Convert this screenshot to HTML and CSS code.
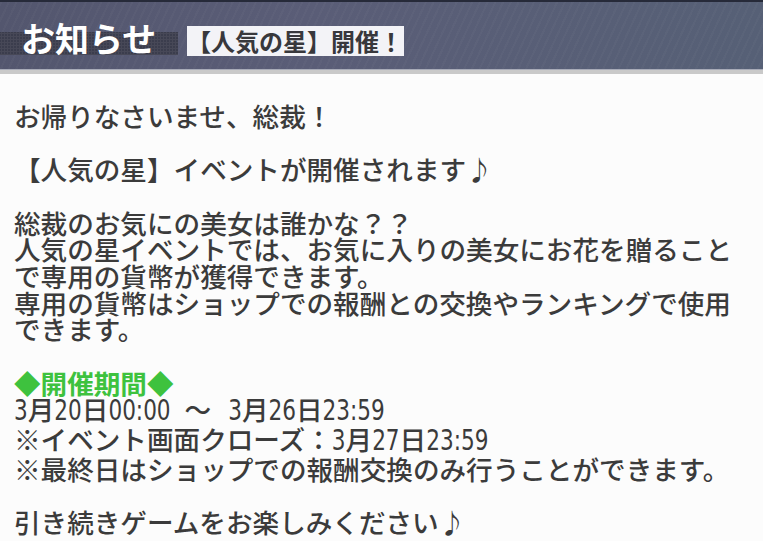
FILE: index.html
```html
<!DOCTYPE html>
<html lang="ja">
<head>
<meta charset="utf-8">
<link rel="stylesheet" href="styles.css">
</head>
<body>
<div class="screen">
  <header class="head">
    <div class="title-band"><h1 class="title">お知らせ</h1></div>
    <div class="subtitle">【人気の星】開催！</div>
  </header>
  <div class="rule"></div>
  <main class="content">
    <p class="line">お帰りなさいませ、総裁！</p>
    <p class="line">&nbsp;</p>
    <p class="line">【人気の星】イベントが開催されます♪</p>
    <p class="line">&nbsp;</p>
    <p class="line">総裁のお気にの美女は誰かな？？</p>
    <p class="line">人気の星イベントでは、お気に入りの美女にお花を贈ること</p>
    <p class="line">で専用の貨幣が獲得できます。</p>
    <p class="line">専用の貨幣はショップでの報酬との交換やランキングで使用</p>
    <p class="line">できます。</p>
    <p class="line">&nbsp;</p>
    <p class="line green">◆開催期間◆</p>
    <p class="line"><span class="num">3</span>月<span class="num">20</span>日<span class="num">00:00</span><span class="tilde">～</span><span class="num">3</span>月<span class="num">26</span>日<span class="num">23:59</span></p>
    <p class="line">※イベント画面クローズ：<span class="num">3</span>月<span class="num">27</span>日<span class="num">23:59</span></p>
    <p class="line">※最終日はショップでの報酬交換のみ行うことができます。</p>
    <p class="line">&nbsp;</p>
    <p class="line">引き続きゲームをお楽しみください♪</p>
  </main>
</div>
</body>
</html>
```
FILE: styles.css
```css
html, body {
  margin: 0;
  padding: 0;
}
body {
  width: 763px;
  height: 541px;
  overflow: hidden;
  background: #fcfcfc;
  font-family: "Noto Sans CJK JP", "Noto Sans", sans-serif;
}
.screen {
  display: flex;
  flex-direction: column;
  width: 763px;
  height: 541px;
}
.head {
  height: 69px;
  border-top: 2px solid #262a39;
  background:
    repeating-linear-gradient(115deg, rgba(255,255,255,0.025) 0 2px, rgba(0,0,0,0) 2px 7px),
    linear-gradient(90deg, #53566e 0%, #5a5d77 40%, #566076 100%);
  display: flex;
  align-items: flex-start;
  padding-top: 22px;
  box-sizing: border-box;
  gap: 9px;
}
.title-band {
  margin-top: 8px;
  width: 178px;
  height: 23px;
  background:
    radial-gradient(circle, rgba(255,255,255,0.06) 1px, rgba(0,0,0,0) 1.2px) 0 0 / 3px 3px,
    #3b3d4d;
  position: relative;
}
.title {
  margin: 0;
  position: absolute;
  left: 21px;
  top: -14px;
  font-size: 34px;
  line-height: 40px;
  font-weight: 700;
  color: #ffffff;
  white-space: nowrap;
}
.subtitle {
  margin-top: 2px;
  height: 30px;
  padding: 0 1px 0 0;
  background: #f3f3f7;
  color: #38383c;
  font-size: 24px;
  line-height: 30px;
  font-weight: 700;
  white-space: nowrap;
}
.rule {
  height: 4px;
  border-top: 1px solid #a8abb8;
  background: #c9c9c9;
}
.content {
  padding: 29px 0 0 14px;
  color: #3b3b3b;
  font-size: 26.6px;
  line-height: 26.67px;
  font-weight: 500;
}
.line {
  margin: 0;
  white-space: nowrap;
}
.green {
  color: #3ec23e;
  font-weight: 700;
}
.num {
  display: inline-block;
  font-family: "DejaVu Sans Condensed", "DejaVu Sans", sans-serif;
  font-stretch: condensed;
  font-size: 24px;
  transform: scaleY(1.2);
  transform-origin: 50% 80%;
}
.tilde {
  padding: 0 17px 0 14px;
}
```
